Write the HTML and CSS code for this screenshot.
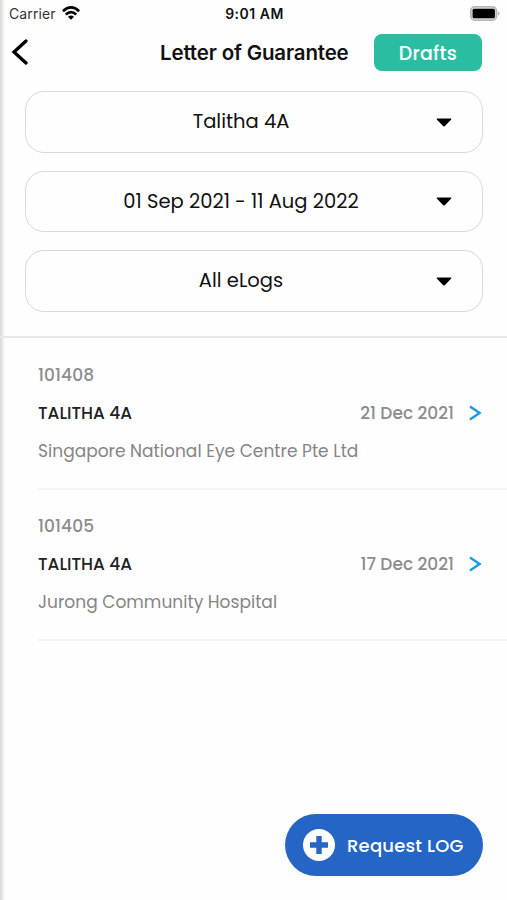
FILE: index.html
```
<!DOCTYPE html>
<html lang="en">
<head>
<meta charset="utf-8">
<meta name="viewport" content="width=device-width, initial-scale=1">
<title>Letter of Guarantee</title>
<link rel="stylesheet" href="styles.css">
</head>
<body>
<main class="screen">
  <div class="status">
    <div class="carrier"><span>Carrier</span>
      <svg class="wifi" viewBox="0 0 18 14" width="18" height="14"><g fill="none" stroke="#000" stroke-width="2.7"><path d="M.9 5.2Q9-2.3 17.1 5.2"/><path d="M3.8 8.6Q9 3.8 14.2 8.6"/></g><path d="M5.9 10.8Q9 8.3 12.1 10.8L9 13.8Z"/></svg>
    </div>
    <span class="clock">9:01 AM</span>
    <svg class="battery" viewBox="0 0 30 15" width="30" height="15"><rect x=".8" y=".8" width="25.7" height="13.4" rx="4" fill="#ddd" stroke="#b5b5b5" stroke-width="1.6"/><rect x="2.6" y="2.7" width="22.3" height="9.6" rx="1.5"/><path d="M27.8 5.2Q31.3 7.5 27.8 9.8Z" fill="#b5b5b5"/></svg>
  </div>
  <header class="bar">
    <svg class="back" viewBox="0 0 18 26" width="18" height="26"><path d="M15 2 3 13 15 24" fill="none" stroke="#000" stroke-width="3.3" stroke-linecap="round" stroke-linejoin="miter"/></svg>
    <h1 class="title">Letter of Guarantee</h1>
    <button class="drafts"><span>Drafts</span></button>
  </header>
  <section class="filters">
    <div class="select"><span class="name">Talitha 4A</span><svg class="caret" viewBox="0 0 16 9" width="16" height="9"><path d="M.8.5H15.2Q15.5 1.5 14.8 2.1L9 8Q8 8.9 7 8L1.2 2.1Q.5 1.5.8.5Z"/></svg></div>
    <div class="select"><span class="range">01 Sep 2021 - 11 Aug 2022</span><svg class="caret" viewBox="0 0 16 9" width="16" height="9"><path d="M.8.5H15.2Q15.5 1.5 14.8 2.1L9 8Q8 8.9 7 8L1.2 2.1Q.5 1.5.8.5Z"/></svg></div>
    <div class="select"><span class="kind">All eLogs</span><svg class="caret" viewBox="0 0 16 9" width="16" height="9"><path d="M.8.5H15.2Q15.5 1.5 14.8 2.1L9 8Q8 8.9 7 8L1.2 2.1Q.5 1.5.8.5Z"/></svg></div>
  </section>
  <section class="list">
    <article class="item">
      <div class="number">101408</div>
      <div class="row"><span class="person">TALITHA 4A</span><span class="date">21 Dec 2021</span><svg class="go" viewBox="0 0 14 16" width="14" height="16"><path d="M2 1.4 11.6 8 2 14.6" fill="none" stroke="#169bdc" stroke-width="2.4"/></svg></div>
      <div class="place">Singapore National Eye Centre Pte Ltd</div>
    </article>
    <article class="item">
      <div class="number">101405</div>
      <div class="row"><span class="person">TALITHA 4A</span><span class="date">17 Dec 2021</span><svg class="go" viewBox="0 0 14 16" width="14" height="16"><path d="M2 1.4 11.6 8 2 14.6" fill="none" stroke="#169bdc" stroke-width="2.4"/></svg></div>
      <div class="place">Jurong Community Hospital</div>
    </article>
  </section>
  <button class="request"><svg viewBox="0 0 32 32" width="32" height="32"><circle cx="16" cy="16" r="16" fill="#fff"/><path d="M16 7V25M7 16H25" fill="none" stroke="#2465c5" stroke-width="5.4"/></svg><span>Request LOG</span></button>
</main>
</body>
</html>
```
FILE: styles.css
```
* { box-sizing: border-box; }
body { margin: 0; background: #fefefe; }
button { border: 0; padding: 0; font: inherit; color: #fff; }
svg { display: block; flex: none; }
.screen {
  width: 507px;
  height: 900px;
  display: flex;
  flex-direction: column;
  overflow: hidden;
  font-family: Poppins, Inter, "Liberation Sans", sans-serif;
  white-space: nowrap;
  color: #111;
  background: linear-gradient(90deg, #d8d8d8 0, #e6e6e6 2px, #f8f8f8 4px, #fefefe 6px);
}
.status {
  height: 27px;
  display: grid;
  grid-template-columns: 1fr auto 1fr;
  align-items: center;
  padding: 0 7px 0 9px;
  font-family: Inter, sans-serif;
  font-size: 14px;
}
.carrier { display: flex; align-items: center; gap: 6px; color: #333; letter-spacing: .1px; }
.wifi { margin-top: -2px; }
.clock { font-weight: 600; letter-spacing: .5px; }
.battery { justify-self: end; margin-top: -1px; }
.bar { height: 50px; display: flex; align-items: center; padding: 0 25px 0 11px; }
.title {
  margin: 1px 26px 0 131px;
  width: 188px;
  font: 600 20.5px/28px Inter, sans-serif;
  letter-spacing: -.16px;
}
.drafts { width: 108px; height: 37px; border-radius: 8px; background: #2bbda2; font-size: 19px; font-weight: 500; letter-spacing: .2px; }
.drafts span { display: block; padding-top: 2px; }
.filters {
  height: 261px;
  padding: 14px 24px 0 25px;
  display: flex;
  flex-direction: column;
  gap: 18px;
  border-bottom: 2px solid #e8e8e8;
}
.select {
  height: 61.5px;
  display: flex;
  align-items: center;
  border: 1.5px solid #d8d8d8;
  border-radius: 19px;
  padding: 0 30px 0 20px;
  font-size: 19.5px;
}
.select span { flex: 1; text-align: center; }
.caret { margin-top: 1px; }
.list { padding-left: 38px; font-size: 17px; line-height: 26px; color: #858585; }
.item {
  height: 151.5px;
  padding: 24px 25px 0 0;
  display: flex;
  flex-direction: column;
  gap: 12px;
  border-bottom: 2px solid #f4f4f4;
}
.item + .item { padding-top: 23px; }
.number { font-weight: 500; letter-spacing: .1px; color: #8c8c8c; }
.row { display: flex; align-items: center; }
.person { flex: 1; color: #222; font-weight: 500; }
.date { margin-right: 14px; font-weight: 500; color: #8c8c8c; }
.place { letter-spacing: .03px; }
.request {
  width: 198px;
  height: 62px;
  margin: auto 24px 24px auto;
  border-radius: 31px;
  background: #2465c5;
  display: flex;
  align-items: center;
  gap: 12px;
  padding-left: 18px;
  font-size: 18px;
  font-weight: 500;
  letter-spacing: .2px;
}
```
